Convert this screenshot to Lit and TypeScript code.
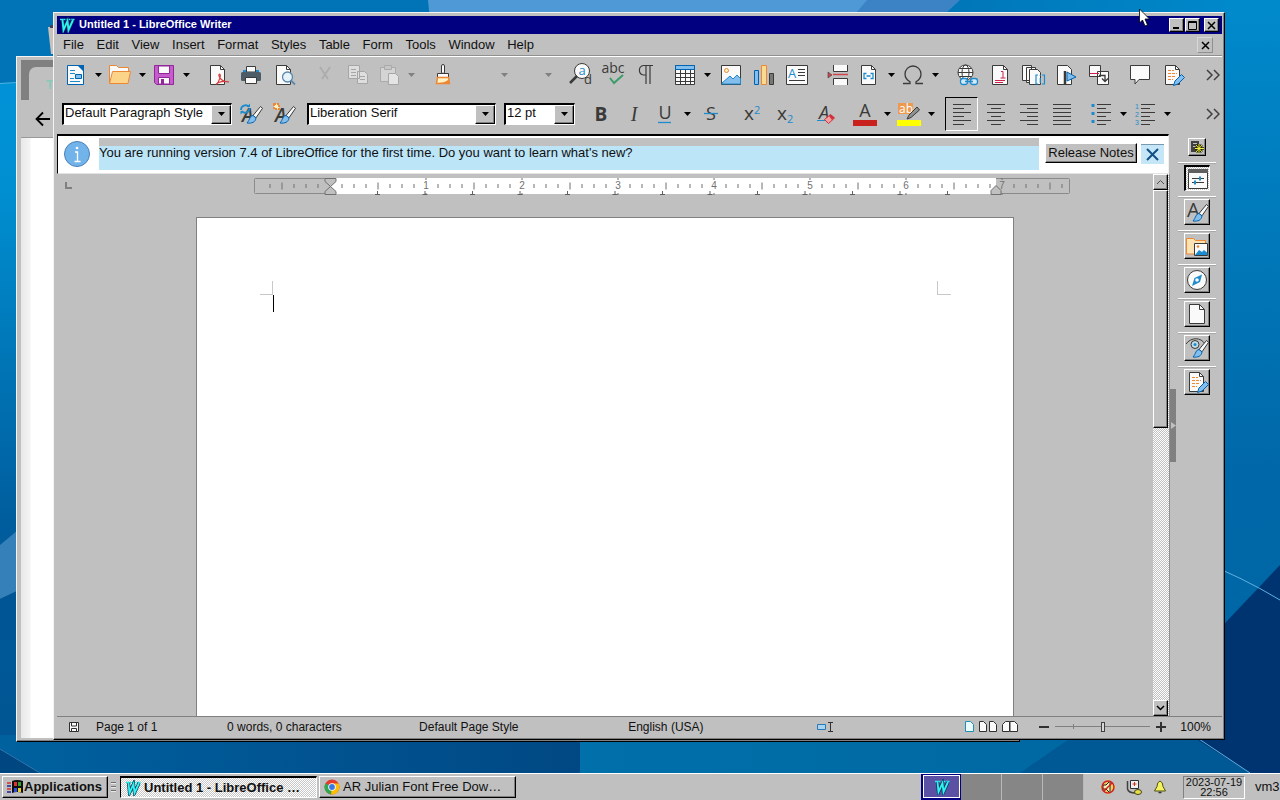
import { LitElement, html, svg, css, TemplateResult } from "lit";
import { customElement, state } from "lit/decorators.js";

const DARK = "#3a3a38";
const BLUE = "#1e8bcd";

/* Shared parts of the icons */
const brush = svg`<path d="M21.500 4.500 14 13.500l3 2.300 6.500-9.500z" fill="#fafafa" stroke="${DARK}"/><path d="M14 13.500c-3.200.3-3 4-6 7.500 5 .6 8.500-.8 9-5.200z" fill="#83beec" stroke="#0063b1"/>`;
const sheet = svg`<path d="M4.500 2.500h10l4 4v15h-14z" fill="#fafafa" stroke="${DARK}"/><path d="M14.500 2.500v4h4" fill="none" stroke="${DARK}"/>`;
const pencil = svg`<path d="M20.500 11.500 14 18l-1.500 4.500L17 21l6.500-6.500z" fill="#83beec" stroke="#0063b1"/>`;
const textLines = svg`<path d="M7 7.500h6M7 10.500h9M7 13.500h7M7 16.500h5" stroke="#ed8733" stroke-dasharray="3 1"/>`;
const lines = (rows: string) => svg`<path d="${rows}" stroke="${DARK}" stroke-width="1.200" fill="none"/>`;

const ICONS: Record<string, TemplateResult> = {
  new: svg`<path d="M3.500 2.500h16v19h-16z" fill="#fafafa" stroke="#0063b1"/><path d="M13 2h7v7z" fill="#0063b1"/><path d="M6 7.500h5M6 10.500h5M6 15.500h4M6 18.500h10" stroke="${BLUE}"/><path d="M11.500 11.500h6v4h-6z" fill="#83beec" stroke="#0063b1"/>`,
  open: svg`<path d="M1.500 20.500v-18h7l2 2h10V9" fill="#fafafa" stroke="#ed8733"/><path d="M1.500 20.500 4.500 8.500h18l-2.500 12z" fill="#fbd48a" stroke="#ed8733"/>`,
  save: svg`<path d="M2.500 2.500h19v19h-17l-2-2z" fill="#c65bcb" stroke="#92279a"/><path d="M6.500 3h11v7.500h-11zM6.500 14.500h11V21h-11z" fill="#fafafa" stroke="#92279a"/><path d="M9 16h3v5H9z" fill="#92279a"/>`,
  pdf: svg`${sheet}<path d="M13.500 11c2 0 0 8-3.500 10.500M13.500 11c-2 1 1 8 9.500 8M10 21.500c2-3 8-4 13-2.500" fill="none" stroke="#d83b3b" stroke-width="1.200"/>`,
  print: svg`<path d="M7.500 3.500h9V9h-9z" fill="#fafafa" stroke="${DARK}"/><rect x="2" y="9" width="20" height="9" rx="1.500" fill="#4d5c66"/><path d="M4 7h3v2H4zM17 7h3v2h-3z" fill="${BLUE}"/><path d="M6.500 14.500h11v6h-11z" fill="#fafafa" stroke="${DARK}"/>`,
  preview: svg`${sheet}<circle cx="15.500" cy="14" r="5" fill="#e6f3fb" stroke="#5b88ab" stroke-width="1.300"/><path d="m19 17.500 4 4" stroke="#5b88ab" stroke-width="1.800"/>`,
  cut: svg`<path d="m7 4 8 12M17 4 9 16" stroke="#adadad" stroke-width="2"/>`,
  copy: svg`<path d="M2.500 2.500h11v13h-11zM11.500 8.500h7l3 3v9h-10z" fill="#dedede" stroke="#a6a6a6"/><path d="M5 6.500h5M5 9.500h5M5 12.500h5M14 13.500h5M14 16.500h5" stroke="#a6a6a6"/>`,
  paste: svg`<path d="M3.500 4.500h15v14h-15z" fill="#d4d4d4" stroke="#aaa"/><path d="M7.500 2.500h7v4h-7z" fill="#c6c6c6" stroke="#aaa"/><path d="M11.500 10.500h7l3 3v8h-10z" fill="#e4e4e4" stroke="#a6a6a6"/>`,
  brushpaint: svg`<rect x="10.500" y="1.500" width="3" height="9" rx="1.500" fill="#fafafa" stroke="${DARK}"/><path d="M6.500 10.500h11v4h-11z" fill="#fafafa" stroke="${DARK}"/><path d="M6.500 14.500h11l1 6h-13z" fill="#fff3c4" stroke="#ed8733" stroke-width="1.500"/><path d="M6 20c5 0 9-1 12-4v4z" fill="#ed8733"/>`,
  none: svg``,
  find: svg`<circle cx="14" cy="8" r="7.500" fill="#fafafa" stroke="${DARK}"/><path d="m9 13-7 7" stroke="${DARK}" stroke-width="2.500"/><text x="14" y="12" class="glyph b" font-size="13" text-anchor="middle">a</text><text x="16" y="21" class="glyph" font-size="13">d</text>`,
  spell: svg`<text x="12" y="10" class="glyph" font-size="14" text-anchor="middle">abc</text><path d="m9 15 4 5 9-8" fill="none" stroke="#3c9c6a" stroke-width="2"/>`,
  para: svg`<path d="M19 2.500H9.500a4.800 4.800 0 0 0 0 9.500H12V3v18M16 3v18" fill="none" stroke="${DARK}" stroke-width="1.200"/>`,
  table: svg`<path d="M2.500 2.500h19v19h-19z" fill="#fafafa" stroke="${DARK}"/><path d="M2.500 2.500h19v4h-19z" fill="#83beec" stroke="#0063b1"/><path d="M3 10.500h18M3 14.500h18M3 18.500h18M7.500 7v14M12.500 7v14M17.500 7v14" stroke="${DARK}"/>`,
  image: svg`<path d="M2.500 2.500h19v19h-19z" fill="#fafafa" stroke="${DARK}"/><circle cx="7.500" cy="7.500" r="2" fill="#fff3c4" stroke="#ed8733"/><path d="m3 20 8-7 3 3 4-4 3.500 3.500V21H3z" fill="#83beec" stroke="${BLUE}"/>`,
  chart: svg`<path d="M2.500 7.500h4v14h-4z" fill="#83beec" stroke="#0063b1"/><path d="M9.500 2.500h5v19h-5z" fill="#f8db8f" stroke="#ed8733"/><path d="M17.500 10.500h4v11h-4z" fill="#797774" stroke="${DARK}"/>`,
  textbox: svg`<path d="M1.500 2.500h21v19h-21z" fill="#fafafa" stroke="${DARK}"/><text x="3" y="15" class="glyph b" font-size="13">A</text><path d="M13 6.500h7M13 9.500h7M13 12.500h7M4 17.500h16" stroke="${DARK}"/>`,
  pagebreak: svg`<path d="M7.500 2v6.500h14V2M7.500 22v-6.500h14V22" fill="#fafafa" stroke="${DARK}"/><path d="M7 11.500h15" stroke="#d0454c" stroke-width="1.500"/><path d="m2 9 4 3-4 3z" fill="#d0454c" stroke="${DARK}" stroke-width=".6"/>`,
  field: svg`${sheet}<path d="M9.500 10.500H7v5h2.500M13.500 10.500H16v5h-2.500M9.500 13h4" fill="none" stroke="${BLUE}" stroke-width="1.300"/>`,
  omega: svg`<path d="M2 20.500h7v-1.800C5 16.500 4 14 4 11a8 8 0 0 1 16 0c0 3-1 5.500-5 7.700v1.800h7" fill="none" stroke="${DARK}" stroke-width="1.300"/>`,
  globe: svg`<circle cx="10.500" cy="9.500" r="7.500" fill="#fafafa" stroke="${DARK}"/><ellipse cx="10.500" cy="9.500" rx="3.500" ry="7.500" fill="none" stroke="${DARK}"/><path d="M3 9.500h15M4.500 5.500h12M4.500 13.500h12" stroke="${DARK}"/><rect x="5.500" y="15.500" width="7" height="6" rx="2.500" fill="#d5e9f7" stroke="${BLUE}" stroke-width="1.300"/><rect x="15.500" y="15.500" width="7" height="6" rx="2.500" fill="#d5e9f7" stroke="${BLUE}" stroke-width="1.300"/><path d="M10 18.500h8" stroke="${BLUE}" stroke-width="1.500"/>`,
  footnote: svg`<path d="M4.500 2.500h11l4 4v15h-15z" fill="#fafafa" stroke="${DARK}"/><path d="M15.500 2.500v4h4" fill="none" stroke="${DARK}"/><path d="M13 8.500h2v6.500M12.500 15h5M7 17.500h10M7 19.500h8" fill="none" stroke="#d0204c"/>`,
  endnote: svg`<path d="M1.500 2.500h9v15h-9zM5.500 4.500h9v15h-9z" fill="#fafafa" stroke="${DARK}"/><path d="M8.500 6.500h8l3 3v12h-11z" fill="#fafafa" stroke="${DARK}"/><path d="M17 12h-2v9h2M21 12h2.500v9H21M19.300 15v5M19.300 12v1" fill="none" stroke="${BLUE}" stroke-width="1.200"/>`,
  bookmark: svg`<path d="M3.500 2.500h10l4 4v15h-14z" fill="#fafafa" stroke="${DARK}"/><path d="M11 8v14" stroke="${DARK}" stroke-width="2.500"/><path d="m13 9 9 5-9 4z" fill="#83beec" stroke="#0063b1"/>`,
  crossref: svg`<path d="M2.500 2.500h11v11h-11zM10.500 8.500h11v13h-11z" fill="#fafafa" stroke="${DARK}"/><path d="M3 10.500h9" stroke="#d0204c"/><path d="M12 12.500h6V18m-3-2.500 3 3 3-3" fill="none" stroke="${DARK}" stroke-width="1.300"/>`,
  comment: svg`<path d="M2.500 2.500h19v14H11l-4 4.500v-4.500H2.500z" fill="#fafafa" stroke="${DARK}"/>`,
  track: svg`${sheet}${textLines}${pencil}`,
  styleUpdate: svg`<text x="3" y="20" class="glyph i" font-weight="600" font-size="19">A</text>${brush}<path d="M2 8a4.500 4.500 0 0 1 8-3M10.500 6a4.500 4.500 0 0 1-8 3" fill="none" stroke="${BLUE}" stroke-width="1.800"/><path d="M7.500 5h3.500V1.500zM5 9H1.500v3.500z" fill="${BLUE}"/>`,
  styleNew: svg`<text x="3" y="20" class="glyph i" font-weight="600" font-size="19">A</text>${brush}<path d="M2 2h5v5H2z" fill="#fff3c4" stroke="#ed8733" stroke-width="1.800" stroke-dasharray="2 1"/>`,
  bold: svg`<text x="12" y="19" class="glyph" font-weight="700" font-size="19" text-anchor="middle">B</text>`,
  italic: svg`<text x="12" y="19" class="serif" font-size="20" text-anchor="middle">I</text>`,
  underline: svg`<text x="12" y="17" class="glyph" font-size="18" text-anchor="middle">U</text><path d="M5 20.500h13" stroke="${BLUE}" stroke-width="1.300"/>`,
  strike: svg`<text x="12" y="18" class="glyph" font-size="18" text-anchor="middle">S</text><path d="M5 11.500h14" stroke="${BLUE}" stroke-width="1.300"/>`,
  sup: svg`<text x="4" y="18" class="glyph" font-size="19">x</text><text x="14" y="12" class="glyph b" font-size="11">2</text>`,
  sub: svg`<text x="4" y="18" class="glyph" font-size="19">x</text><text x="14" y="21" class="glyph b" font-size="11">2</text>`,
  clear: svg`<text x="5" y="17" class="glyph i" font-size="18">A</text><path d="M3 18.500h8" stroke="${BLUE}"/><path d="m10.500 17.500 6-5 4 3.500-6 5.500z" fill="#f4a0a0" stroke="#d0303c"/><path d="m15 14 3 4 2.500-2.500-4-3z" fill="#d0303c"/>`,
  color: svg`<text x="12" y="15" class="glyph" font-size="18" text-anchor="middle">A</text><path d="M0 18h24v6H0z" fill="#c9211e"/>`,
  highlight: svg`<path d="M1 1h15v11H1z" fill="#ed9a50"/><text x="2" y="11" class="white" font-size="12">ab</text><path d="m20 5-8 8-2 4 4-1.500L22.500 8z" fill="#909090" stroke="${DARK}"/><path d="M0 18h24v6H0z" fill="#ffff00"/>`,
  left: lines("M3 2.500h18M3 6.500h11M3 10.500h18M3 14.500h11M3 18.500h18M3 22.500h11"),
  center: lines("M3 2.500h18M7 6.500h10M3 10.500h18M7 14.500h10M3 18.500h18M7 22.500h10"),
  right: lines("M3 2.500h18M10 6.500h11M3 10.500h18M10 14.500h11M3 18.500h18M10 22.500h11"),
  justify: lines("M3 2.500h18M3 6.500h18M3 10.500h18M3 14.500h18M3 18.500h18M3 22.500h18"),
  bullets: svg`${lines("M8 2.500h14M8 6.500h9M8 10.500h14M8 14.500h9M8 18.500h14M8 22.500h9")}<path d="M2.500 3.500h3M2.500 11.500h3M2.500 19.500h3" stroke="${BLUE}" stroke-width="3"/>`,
  numbers: svg`${lines("M8 2.500h14M8 6.500h9M8 10.500h14M8 14.500h9M8 18.500h14M8 22.500h9")}<g class="digits" font-size="7"><text x="2" y="7">1</text><text x="2" y="15">2</text><text x="2" y="23">3</text></g>`,
  props: svg`<path d="M2.500 2.500h19v19h-19z" fill="#fafafa" stroke="${DARK}"/><path d="M2 2h20v4H2z" fill="#606060"/><path d="M6 11.500h12M6 15.500h12" stroke="${DARK}"/><path d="M14 9.500v4M9 13.500v4" stroke="${BLUE}" stroke-width="2"/>`,
  styles: svg`<text x="2" y="17" class="glyph" font-size="20">A</text>${brush}`,
  gallery: svg`<path d="M1.500 20V4.500h7l2 2h10V20z" fill="#fbe3b4" stroke="#ed8733"/><path d="M9.500 9.500h13v12h-13z" fill="#fafafa" stroke="${DARK}"/><path d="m10 21 4-5 3 2 2-2 3.500 3v2z" fill="${BLUE}"/><circle cx="13" cy="12.500" r="1.300" fill="#ed8733"/>`,
  navigator: svg`<circle cx="12" cy="12" r="9.500" fill="#fafafa" stroke="${DARK}"/><path d="m17 6.500-2 7.500-8 4 2.500-8z" fill="${BLUE}"/><circle cx="12" cy="12" r="1.800" fill="#fafafa"/>`,
  page: svg`<path d="M4.500 2.500h10l5 5v14h-15z" fill="#fafafa" stroke="${DARK}"/><path d="M14.500 2.500v5h5" fill="none" stroke="${DARK}"/>`,
  inspector: svg`<path d="M1 8c5-7 15-7 19 0" fill="none" stroke="${DARK}"/><circle cx="10" cy="8.500" r="4" fill="#c0dce8" stroke="${DARK}"/><circle cx="10" cy="8.500" r="1.500" fill="${BLUE}"/>${brush}`,
  changes: svg`${sheet}${textLines}${pencil}`,
};

const icon = (name: string) => html`<svg class="icon" viewBox="0 0 24 24" aria-hidden="true">${ICONS[name]}</svg>`;
const arrow = html`<svg class="arrow" viewBox="0 0 7 4" aria-hidden="true"><path d="M0 0h7L3.500 4z" /></svg>`;

interface Tool { icon: string; label: string; split?: boolean; off?: boolean; pressed?: boolean }
const t = (name: string, label: string, extra: Partial<Tool> = {}): Tool => ({ icon: name, label, ...extra });

const STANDARD: Tool[][] = [
  [t("new", "New", { split: true }), t("open", "Open", { split: true }), t("save", "Save", { split: true })],
  [t("pdf", "Export as PDF"), t("print", "Print"), t("preview", "Print preview")],
  [t("cut", "Cut", { off: true }), t("copy", "Copy", { off: true }), t("paste", "Paste", { split: true, off: true })],
  [t("brushpaint", "Clone formatting")],
  [t("none", "Undo", { split: true, off: true }), t("none", "Redo", { split: true, off: true })],
  [t("find", "Find and replace"), t("spell", "Check spelling"), t("para", "Formatting marks")],
  [t("table", "Insert table", { split: true }), t("image", "Insert image"), t("chart", "Insert chart"), t("textbox", "Insert text box")],
  [t("pagebreak", "Insert page break"), t("field", "Insert field", { split: true }), t("omega", "Special character", { split: true })],
  [t("globe", "Hyperlink"), t("footnote", "Footnote"), t("endnote", "Endnote"), t("bookmark", "Bookmark"), t("crossref", "Cross-reference")],
  [t("comment", "Comment"), t("track", "Track changes")],
];
const STYLE_TOOLS: Tool[] = [t("styleUpdate", "Update style"), t("styleNew", "New style")];
const FORMAT: Tool[][] = [
  [t("bold", "Bold"), t("italic", "Italic"), t("underline", "Underline", { split: true }), t("strike", "Strikethrough")],
  [t("sup", "Superscript"), t("sub", "Subscript")],
  [t("clear", "Clear formatting")],
  [t("color", "Font color", { split: true }), t("highlight", "Highlighting", { split: true })],
  [t("left", "Align left", { pressed: true }), t("center", "Center"), t("right", "Align right"), t("justify", "Justify")],
  [t("bullets", "Bullets", { split: true }), t("numbers", "Numbering", { split: true })],
];
const PANELS = [["props", "Properties"], ["styles", "Styles"], ["gallery", "Gallery"], ["navigator", "Navigator"], ["page", "Page"], ["inspector", "Style inspector"], ["changes", "Manage changes"]];
const MENUS = ["File", "Edit", "View", "Insert", "Format", "Styles", "Table", "Form", "Tools", "Window", "Help"];

const wLogo = html`<svg class="wlogo" viewBox="0 0 16 16" aria-hidden="true"><path d="M1 2.500h5.500M7 2.500h4M11.500 2.500h4" stroke="#30e8e8" stroke-width="1.500" /><path d="M3.500 3 4.500 13 8.500 4l1 9L14 3" fill="none" stroke="#003050" stroke-width="3.200" /><path d="M3.500 3 4.500 13 8.500 4l1 9L14 3" fill="none" stroke="#30f0f0" stroke-width="1.900" /></svg>`;

/* Ruler geometry in pixels: zero position, inch pitch, and full length */
const ZERO = 76, INCH = 96, LENGTH = 816, TEXT_END = 742;

@customElement("app-root")
export class AppRoot extends LitElement {
  @state() private zoom = 50;

  static styles = css`
    :host { display: flex; flex-direction: column; height: 100vh; overflow: hidden; font: 13px/16px "Liberation Sans", Arial, sans-serif; color: #101010; }
    * { box-sizing: border-box; }
    button, select, input { font: inherit; color: inherit; margin: 0; padding: 0; border: 0; border-radius: 0; background: none; }
    button { display: inline-flex; align-items: center; justify-content: center; white-space: nowrap; }
    svg { display: block; flex: none; }
    .glyph { font-family: "Open Sans", sans-serif; fill: #3a3a38; }
    .b { fill: #1e8bcd; }
    .white { font-family: "Open Sans", sans-serif; fill: #fff; }
    .digits { font-family: "Liberation Sans", Arial, sans-serif; fill: #1e8bcd; }
    .i { font-style: italic; }
    .serif { font-family: "Liberation Serif", serif; font-style: italic; fill: #3a3a38; }
    .raised { background: #c0c0c0; border: 1px solid; border-color: #fff #000 #000 #fff; box-shadow: inset -1px -1px #808080; }
    .desktop { position: relative; flex: 1; min-height: 0; background: #006aa8; }
    .wallpaper { position: absolute; inset: 0; width: 100%; height: 100%; }
    .trash { position: absolute; left: 47px; top: 24px; width: 24px; height: 30px; }
    .pointer { position: absolute; left: 1138px; top: 8px; width: 12px; height: 19px; }

    .window { position: absolute; display: flex; flex-direction: column; background: #c0c0c0; border: 1px solid; border-color: #f4f4f4 #000 #000 #f4f4f4; box-shadow: inset -1px -1px #808080; }
    .browser { left: 16px; right: 260px; top: 56px; bottom: 31px; padding: 3px 4px; }
    .tabs { height: 40px; background: #808080; padding: 7px 0 0 8px; }
    .tab { height: 100%; background: #c0c0c0; border-radius: 7px 7px 0 0; padding: 10px 17px; color: #8cc8b8; font-weight: 700; }
    .nav { height: 38px; padding: 11px 14px; border-bottom: 1px solid #999; }
    .web { flex: 1; background: linear-gradient(90deg, #e8e8e8, #f4f4f4 9px, #fff 10px); }

    .writer { left: 53px; right: 55px; top: 12px; bottom: 33px; padding: 3px 2px 2px 3px; }
    .title { display: flex; align-items: center; gap: 4px; height: 18px; padding: 0 3px 0 2px; background: #000080; color: #fff; font: bold 11px/16px "Liberation Sans", Arial, sans-serif; }
    .title .name { flex: 1; padding-bottom: 2px; }
    .wlogo { width: 16px; height: 16px; }
    .controls { display: flex; gap: 1px; }
    .controls button { width: 15px; height: 14px; }
    .controls button:last-child { margin-left: 3px; }
    .menu { display: flex; align-items: center; justify-content: space-between; height: 23px; padding: 0 9px 0 6px; border-bottom: 1px solid #fff; box-shadow: inset 0 -1px #909090; }
    .items { display: flex; justify-content: space-between; width: 471px; }
    .menu a { color: inherit; text-decoration: none; padding-bottom: 1px; }
    .menu button { width: 16px; height: 16px; border: 1px solid; border-color: #d8d8d8 #909090 #909090 #d8d8d8; }
    .bar { display: flex; align-items: center; gap: 8px; height: 36px; padding: 0 1px 0 3px; }
    .bar.format { height: 41px; padding-left: 5px; }
    .group { display: flex; align-items: center; }
    .tool { width: 33px; height: 34px; padding-left: 2px; }
    .icon { width: 24px; height: 24px; overflow: visible; }
    .split { width: 44px; justify-content: space-between; padding: 0 2px 0 4px; }
    .arrow { width: 7px; height: 4px; fill: #000; }
    .off .arrow { fill: #808080; }
    .pressed { padding-left: 0; border: 1px solid; border-color: #000 #fff #fff #000; }
    .more { margin-left: auto; width: 16px; height: 16px; }
    .combo { display: grid; grid-template-columns: 1fr 20px; height: 22px; border: 1px solid; border-color: #000 #fff #fff #000; border-width: 2px 1px 1px 2px; background: #fff; }
    .combo select { grid-area: 1 / 1 / 2 / 3; appearance: none; width: 100%; outline: none; padding: 0 22px 2px 1px; }
    .combo span { grid-area: 1 / 2; display: grid; place-items: center; pointer-events: none; }
    .w-style { width: 170px; margin-right: 1px; } .w-font { width: 189px; } .w-size { width: 71px; }

    .body { display: flex; flex: 1; min-height: 0; border-bottom: 1px solid #808080; }
    .main { flex: 1; min-width: 0; display: flex; flex-direction: column; }
    .info { display: flex; align-items: center; gap: 4px; height: 40px; padding: 0 4px 2px 6px; background: #fff; border: 1px solid; border-color: #000 #f0f0f0 #e4e4e4 #000; border-top-width: 2px; margin-right: 1px; }
    .info svg.i-mark { width: 26px; height: 26px; }
    .info p { flex: 1; margin: 0 2px 0 5px; height: 32px; padding: 7px 0 0; background: linear-gradient(#c0c0c0 8px, #bde5f8 8px); }
    .info .notes { height: 20px; width: 92px; margin-bottom: 2px; }
    .info .close { width: 23px; height: 20px; background: #c5e6f7; border-top: 1px solid #7898b0; }
    .view { display: flex; flex: 1; min-height: 0; }
    .canvas { position: relative; flex: 1; min-width: 0; display: flex; flex-direction: column; align-items: center; overflow: hidden; }
    .ruler-row { width: 100%; display: flex; justify-content: center; padding: 4px 0 0 114px; height: 43px; flex: none; }
    .ruler { width: 816px; height: 18px; overflow: visible; }
    .ruler text { font: 10px "Liberation Sans", Arial, sans-serif; fill: #707070; text-anchor: middle; }
    .tabkind { position: absolute; left: 8px; top: 8px; width: 7px; height: 7px; border: 2px solid #808080; border-width: 0 0 2px 2px; }
    .paper { width: 818px; flex: 1; background: #fff; border: 1px solid #808080; border-bottom: 0; padding: 63px 62px 0 63px; outline: none; }
    .marks { display: flex; justify-content: space-between; }
    .marks i { width: 13px; height: 14px; border: 1px solid #c8c8c8; border-width: 0 1px 1px 0; }
    .marks i:last-child { width: 14px; border-width: 0 0 1px 1px; }
    .caret { width: 1px; height: 17px; margin-left: 13px; background: #000; }
    .scroll { width: 17px; display: flex; flex-direction: column; padding-right: 1px; border-right: 1px solid #909090; background: conic-gradient(#fff 25%, #c0c0c0 0 50%, #fff 0 75%, #c0c0c0 0) 0 0 / 2px 2px; }
    .scroll button { height: 16px; width: 100%; }
    .thumb { height: 44%; margin-bottom: auto; }
    .side { width: 52px; display: flex; align-items: center; }
    .grip { width: 6px; height: 73px; background: #808080; display: grid; place-items: center; }
    .panels { flex: 1; align-self: stretch; display: flex; flex-direction: column; align-items: center; padding: 4px 6px 0 2px; }
    .panels > .cfg { width: 18px; height: 18px; margin-bottom: 6px; }
    .slot { width: 38px; height: 34px; padding-top: 2px; display: grid; place-items: start center; border-top: 1px solid #fff; box-shadow: inset 0 1px #a8a8a8; }
    .slot button { width: 26px; height: 26px; }
    .slot .active { border-color: #000 #fff #fff #000; border-width: 2px 1px 1px 2px; box-shadow: none; background: conic-gradient(#fff 25%, #c0c0c0 0 50%, #fff 0 75%, #c0c0c0 0) 0 0 / 2px 2px; }
    .status { display: flex; align-items: center; height: 20px; font-size: 12px; padding: 0 11px 1px 11px; white-space: nowrap; }
    .c1 { flex: 0 0 28px; } .c2 { flex: 131 1 0; } .c3 { flex: 192 1 0; } .c4 { flex: 209 1 0; } .c5 { flex: 189 1 0; } .c6 { flex: 148 1 0; }
    .views { display: flex; gap: 5px; width: 74px; }
    .status input { appearance: none; width: 95px; height: 12px; margin: 0 6px; background: linear-gradient(#808080, #808080) center / 100% 1px no-repeat, linear-gradient(#808080, #808080) 18px center / 1px 5px no-repeat; }
    .status input::-webkit-slider-thumb { appearance: none; width: 4px; height: 10px; background: #d8d8d8; border: 1px solid #404040; }
    .pct { margin-left: 14px; }

    .taskbar { display: flex; align-items: center; height: 27px; flex: none; padding: 0 0 0 2px; background: #c0c0c0; border-top: 1px solid #fff; overflow: hidden; white-space: nowrap; }
    .taskbar > button { height: 22px; justify-content: flex-start; }
    .apps { width: 106px; padding: 0 3px; font-weight: 700; }
    .handle { width: 5px; height: 10px; margin: 0 4px 0 3px; background: repeating-linear-gradient(#707070 0 1px, #e8e8e8 1px 2px, #c0c0c0 2px 4px); }
    .task { width: 197px; padding: 0 4px; gap: 3px; margin-right: 2px; }
    .task.on { font-weight: 700; border-color: #000 #fff #fff #000; border-width: 2px 1px 1px 1px; box-shadow: none; background: conic-gradient(#fff 25%, #c8c8c8 0 50%, #fff 0 75%, #c8c8c8 0) 0 0 / 2px 2px; }
    .pager { display: flex; margin-left: auto; align-self: stretch; }
    .pager button { width: 41px; height: 26px; background: #868686; border-right: 1px solid #b8b8b8; }
    .pager .cur { width: 40px; background: #5a50a4; border: 1px solid #000080; border-width: 1px 1px 2px 2px; box-shadow: inset 0 0 0 1px #fff; }
    .tray { display: flex; gap: 10px; margin: 0 15px 0 16px; }
    .clock { width: 62px; height: 23px; border: 1px solid; border-color: #808080 #fff #fff #808080; font-size: 11px; line-height: 10px; text-align: center; }
    .host { width: 35px; padding-left: 10px; }
  `;

  private tool(x: Tool) {
    return html`<button class="tool ${x.split ? "split" : ""} ${x.off ? "off" : ""} ${x.pressed ? "pressed" : ""}" aria-label=${x.label} ?disabled=${x.off}>${icon(x.icon)}${x.split ? arrow : ""}</button>`;
  }

  private groups(g: Tool[][]) {
    return g.map((items) => html`<div class="group">${items.map((x) => this.tool(x))}</div>`);
  }

  private combo(label: string, value: string, width: string) {
    return html`<div class="combo ${width}"><select aria-label=${label}><option>${value}</option></select><span class="raised">${arrow}</span></div>`;
  }

  private more() {
    return html`<button class="more" aria-label="More"><svg width="14" height="12" viewBox="0 0 14 12"><path d="m1 1 5 5-5 5M8 1l5 5-5 5" fill="none" stroke="#404040" stroke-width="1.500" /></svg></button>`;
  }

  private ruler() {
    const marks = [];
    for (let k = -5; k <= 61; k++) {
      if (k >= 0 && k % 8 === 0) continue;
      const h = k % 4 === 0 ? 7 : 4;
      marks.push(svg`<path d="M${ZERO + (k * INCH) / 8} ${8 - h / 2}v${h}" stroke="#707070" />`);
    }
    const nums = [1, 2, 3, 4, 5, 6, 7].map((n) => svg`<path d="M${ZERO + n * INCH} 0v2m0 13v2" stroke="#707070" /><text x=${ZERO + n * INCH} y="11">${n}</text>`);
    const stops = [];
    for (let s = 1; s < 14; s++) stops.push(svg`<path d="M${ZERO + s * 47.5} 13v3.500m-2.500 0h5" stroke="#606060" fill="none" />`);
    return html`<svg class="ruler" viewBox="0 0 816 18" aria-label="Ruler">
      <rect x=".5" y=".5" width=${LENGTH - 1} height="15" rx="1" fill="#c0c0c0" stroke="#8a8a8a" />
      <rect x=${ZERO} y="0" width=${TEXT_END - ZERO} height="16" fill="#fff" />
      ${marks}${nums}${stops}
      <path d="M71 .5h11v3l-5.500 5 5.500 5v3H71v-3l5.500-5-5.500-5zM737 16.500v-4l5-5 5 5v4z" fill="#c0c0c0" stroke="#707070" />
    </svg>`;
  }

  render() {
    return html`
      <main class="desktop">
        <svg class="wallpaper" viewBox="0 0 1280 773" preserveAspectRatio="none" aria-hidden="true">
          <defs>
            <linearGradient id="l" x1="0" y1="0" x2="0" y2="1"><stop offset="0" stop-color="#0092d6" /><stop offset=".15" stop-color="#0090d2" /><stop offset=".65" stop-color="#005c9c" /><stop offset="1" stop-color="#005490" /></linearGradient>
            <linearGradient id="r" x1="0" y1="0" x2="0" y2="1"><stop offset="0" stop-color="#008acc" /><stop offset=".6" stop-color="#0068a8" /><stop offset="1" stop-color="#0066a4" /></linearGradient>
            <linearGradient id="top"><stop offset="0" stop-color="#0076b8" /><stop offset="1" stop-color="#0088ca" /></linearGradient>
            <linearGradient id="m"><stop offset="0" stop-color="#00619f" /><stop offset="1" stop-color="#004884" /></linearGradient>
            <linearGradient id="n"><stop offset="0" stop-color="#0070aa" /><stop offset="1" stop-color="#0066a0" /></linearGradient>
          </defs>
          <path d="M0 0h1280v773H0z" fill="#0074b6" />
          <path d="M0 83 60 80V773H0z" fill="url(#l)" /><path d="M0 83.500 60 80" stroke="#4ab0e0" />
          <path d="M428 0h532l-20 20H430z" fill="#4f9ad6" /><path d="M867 0h93l-20 20H850z" fill="#3b83c4" />
          <path d="M1200 0h80v773h-80z" fill="url(#r)" /><path d="M960 0h265v14H945z" fill="url(#top)" />
          <path d="M0 545 60 495v76L0 599z" fill="#3580b8" /><path d="M0 599 60 571V640H0z" fill="#005594" />
          <path d="M0 735h580v38H0z" fill="url(#m)" /><path d="M0 749 40 773H0z" fill="#004680" />
          <path d="M0 749 40 773" stroke="#2f75ac" />
          <path d="M580 735h620v38H580z" fill="url(#n)" /><path d="m1020 773 55-38h122l55 38z" fill="#005894" />
          <path d="M1280 565 1190 660V735l60 38h30z" fill="#003470" />
          <path d="m1190 733 60 40M1200 561q40 15 80 39" fill="none" stroke="#60b0e0" />
        </svg>
        <svg class="trash" viewBox="0 0 24 30" aria-hidden="true"><path d="M1 3h20v27H4z" fill="#c9c2bd" /><path d="M3 1h18v3H3z" fill="#404058" /></svg>

        <section class="window browser" aria-label="AR Julian Font Free Download">
          <div class="tabs"><div class="tab">T</div></div>
          <div class="nav"><svg width="16" height="16" viewBox="0 0 16 16"><path d="M15 8H1.500M8 1.500 1.500 8 8 14.500" fill="none" stroke="#000" stroke-width="1.800" /></svg></div>
          <div class="web"></div>
        </section>

        <section class="window writer" aria-label="LibreOffice Writer">
          <header class="title">${wLogo}<span class="name">Untitled 1 - LibreOffice Writer</span>
            <div class="controls">
              <button class="raised" aria-label="Minimize"><svg width="9" height="9"><path d="M1 7h6" stroke="#000" stroke-width="2" /></svg></button>
              <button class="raised" aria-label="Maximize"><svg width="9" height="9"><path d="M.5.500h8v8h-8zM0 1.500h9" fill="none" stroke="#000" /></svg></button>
              <button class="raised" aria-label="Close"><svg width="9" height="9"><path d="m1 1 7 7M8 1 1 8" stroke="#000" stroke-width="1.500" /></svg></button>
            </div>
          </header>
          <nav class="menu"><div class="items">${MENUS.map((m) => html`<a href="#">${m}</a>`)}</div><button aria-label="Close document"><svg width="9" height="9"><path d="m1 1 7 7M8 1 1 8" stroke="#000" stroke-width="1.500" /></svg></button></nav>
          <div class="bar">${this.groups(STANDARD)}${this.more()}</div>
          <div class="bar format">
            <div class="group">${this.combo("Paragraph style", "Default Paragraph Style", "w-style")}${STYLE_TOOLS.map((x) => this.tool(x))}</div>
            ${this.combo("Font name", "Liberation Serif", "w-font")}
            ${this.combo("Font size", "12 pt", "w-size")}
            ${this.groups(FORMAT)}${this.more()}
          </div>
          <div class="body">
            <div class="main">
              <div class="info" role="status">
                <svg class="i-mark" viewBox="0 0 26 26"><circle cx="13" cy="13" r="12.500" fill="#72b4ea" stroke="#4a80b8" /><circle cx="13" cy="7" r="1.300" fill="#fff" /><path d="M11 11h2.500v9M10.500 20.500h6" fill="none" stroke="#fff" stroke-width="1.300" /></svg>
                <p>You are running version 7.4 of LibreOffice for the first time. Do you want to learn what's new?</p>
                <button class="raised notes">Release Notes</button>
                <button class="close" aria-label="Close infobar"><svg width="13" height="13"><path d="m1 1 11 11M12 1 1 12" stroke="#124f85" stroke-width="2" /></svg></button>
              </div>
              <div class="view">
                <div class="canvas">
                  <span class="tabkind"></span>
                  <div class="ruler-row">${this.ruler()}</div>
                  <div class="paper" role="textbox" aria-label="Document" tabindex="0">
                    <div class="marks"><i></i><i></i></div>
                    <div class="caret"></div>
                  </div>
                </div>
                <div class="scroll">
                  <button class="raised" aria-label="Scroll up"><svg width="9" height="6"><path d="m1 5 3.500-3.500L8 5" fill="none" stroke="#505050" /></svg></button>
                  <div class="raised thumb"></div>
                  <button class="raised" aria-label="Scroll down"><svg width="9" height="6"><path d="m1 1 3.500 3.500L8 1" fill="none" stroke="#000" stroke-width="1.500" /></svg></button>
                </div>
              </div>
            </div>
            <aside class="side">
              <div class="grip"><svg width="5" height="7"><path d="M0 0 5 3.500 0 7z" fill="#c0c0c0" /></svg></div>
              <div class="panels">
                <button class="raised cfg" aria-label="Sidebar settings"><svg width="14" height="14"><path d="M1 1h8v11H1z" fill="#404040" /><path d="M3 3.500h4M3 6.500h3" stroke="#c0c0c0" /><path d="M9 4v9M5 8.500h9M6 5l6 7M12 5l-6 7" stroke="#202000" stroke-width="2.500" /><path d="M9 4v9M5 8.500h9M6 5l6 7M12 5l-6 7" stroke="#f0f040" /></svg></button>
                ${PANELS.map(([n, l], k) => html`<div class="slot"><button class="raised ${k ? "" : "active"}" aria-label=${l}>${icon(n)}</button></div>`)}
              </div>
            </aside>
          </div>
          <footer class="status">
            <span class="c1"><svg width="12" height="12" viewBox="0 0 12 12"><path d="M1.500 1.500h9v9h-9z" fill="#fafafa" stroke="#303030" /><path d="M3.500 2v3h5V2M3.500 10V7.500h5V10" fill="none" stroke="#303030" /></svg></span>
            <span class="c2">Page 1 of 1</span><span class="c3">0 words, 0 characters</span><span class="c4">Default Page Style</span><span class="c5">English (USA)</span>
            <span class="c6"><svg width="16" height="12"><path d="M.5 3.500h8v5h-8z" fill="#a8d4f0" stroke="#2878b8" /><path d="M11 1.500h5M13.500 1.500v9M11 10.500h5" stroke="#303030" fill="none" /></svg></span>
            <span class="views">
              <svg width="9" height="11"><path d="M.5.500h5l3 3v7h-8z" fill="#eafaff" stroke="#2090b0" /></svg>
              <svg width="18" height="11"><path d="M.5.500h4l3 3v7h-7zM10.500.500h4l3 3v7h-7z" fill="#fafafa" stroke="#303030" /></svg>
              <svg width="16" height="11"><path d="M3.500.500h4v10h-7v-7zM8 .5h4.500l3 3v7H8z" fill="#fafafa" stroke="#303030" /></svg>
            </span>
            <svg width="10" height="10"><path d="M0 5h10" stroke="#303030" stroke-width="2" /></svg>
            <input type="range" aria-label="Zoom" min="0" max="100" .value=${String(this.zoom)} @input=${(e: Event) => (this.zoom = Number((e.target as HTMLInputElement).value))} />
            <svg width="10" height="10"><path d="M0 5h10M5 0v10" stroke="#303030" stroke-width="2" /></svg>
            <span class="pct">100%</span>
          </footer>
        </section>
        <svg class="pointer" viewBox="0 0 12 19" aria-hidden="true"><path d="M1.500 1v14l3-3 2.500 6 2.500-1L7 11h4.500z" fill="#fff" stroke="#000" stroke-width=".8" /></svg>
      </main>
      <footer class="taskbar">
        <button class="raised apps"><svg width="18" height="16" viewBox="0 0 18 16"><path d="M6 2q5-2 11 0v12q-6-2-11 0z" fill="#101010" /><path d="M8 3h3v4H8z" fill="#e03030" /><path d="M12 3h3v4h-3z" fill="#30a030" /><path d="M8 9h3v4H8z" fill="#3050e0" /><path d="M12 9h3v4h-3z" fill="#e8d030" /><path d="M1 4h4M1 10h4" stroke="#d03030" stroke-width="1.500" /><path d="M1 7h4M1 13h4" stroke="#202090" stroke-width="1.500" /></svg>Applications</button>
        <span class="handle"></span>
        <button class="raised task on">${wLogo}Untitled 1 - LibreOffice …</button>
        <button class="raised task"><svg width="16" height="16" viewBox="0 0 16 16"><circle cx="8" cy="8" r="7.500" fill="#e33b2e" /><path d="M8 8 1.500 4.300A7.500 7.500 0 0 0 7 15.400z" fill="#2da94f" /><path d="m8 8-1 7.400A7.500 7.500 0 0 0 14.600 4.500H8z" fill="#fdbd00" /><circle cx="8" cy="8" r="3.800" fill="#fff" /><circle cx="8" cy="8" r="2.900" fill="#3a78e8" /></svg>AR Julian Font Free Dow…</button>
        <div class="pager"><button class="cur" aria-label="Workspace 1">${wLogo}</button><button aria-label="Workspace 2"></button><button aria-label="Workspace 3"></button><button aria-label="Workspace 4"></button></div>
        <div class="tray">
          <svg width="16" height="16"><path d="m8 0 8 8-8 8-8-8z" fill="#f0d060" /><path d="M3 6h3l4-4v12l-4-4H3z" fill="#f8f0b0" stroke="#202020" /><circle cx="8" cy="8" r="6" fill="none" stroke="#d02020" stroke-width="1.500" /><path d="m4 12 8-8" stroke="#d02020" stroke-width="1.500" /></svg>
          <svg width="16" height="16"><path d="M4.500 1.500h8v8h-8z" fill="#f0f0f0" stroke="#303030" /><path d="M8.500 3v4M6.500 5h4" stroke="#d03020" /><path d="M1.500 2v8q1 4 8 4" fill="none" stroke="#404040" stroke-width="1.500" /><ellipse cx="12" cy="13" rx="3.500" ry="2.500" fill="#e8e040" stroke="#404020" /></svg>
          <svg width="16" height="16"><path d="M8 2q-3 1-3 5.500L2.500 12h11L11 7.500Q11 3 8 2z" fill="#f4f460" stroke="#505010" /><path d="M6.500 13.500h3" stroke="#303030" stroke-width="1.500" /></svg>
        </div>
        <time class="clock">2023-07-19<br />22:56</time>
        <span class="host">vm3</span>
      </footer>`;
  }
}
